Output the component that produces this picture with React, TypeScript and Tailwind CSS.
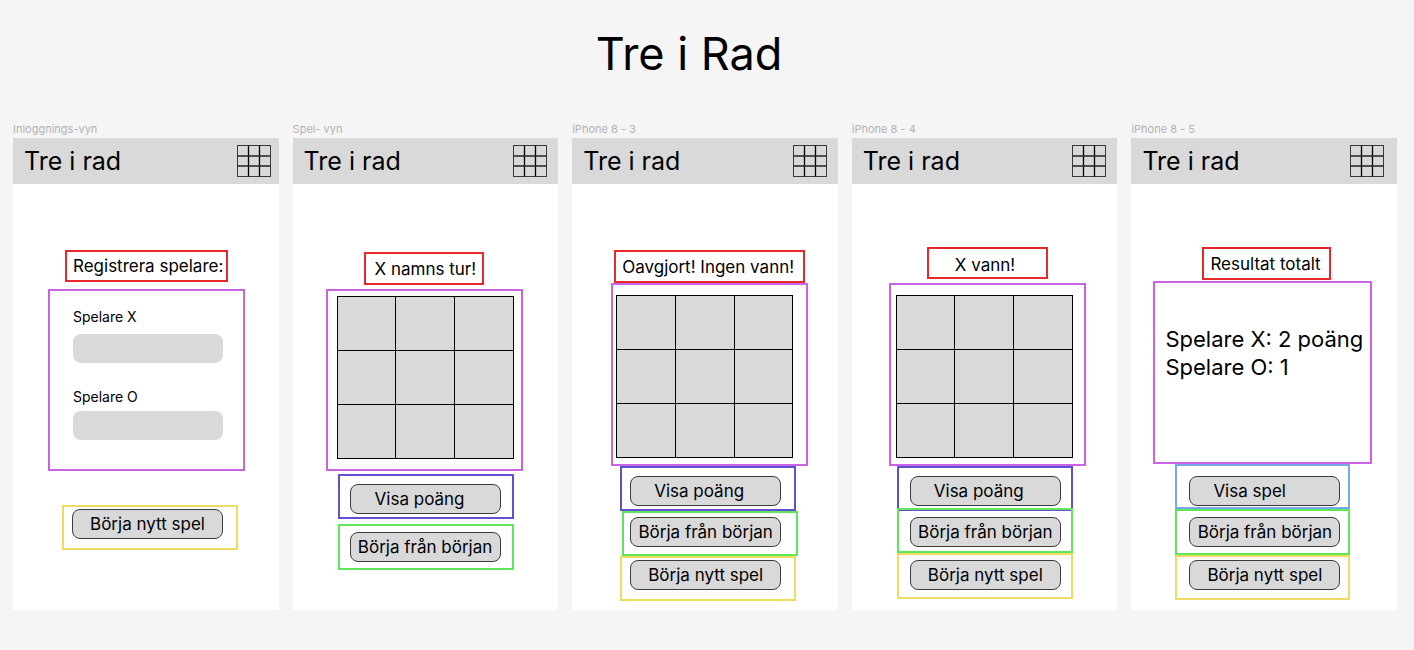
import type { ReactNode } from "react";

const tones = {
  red: "border-[#e8292c]",
  purple: "border-[#cc62e6]",
  indigo: "border-[#6250d2]",
  sky: "border-[#76a9e6]",
  green: "border-[#5fe65b]",
  yellow: "border-[#eedc60]",
};

function Zone({ tone, className, children }: { tone: keyof typeof tones; className: string; children: ReactNode }) {
  return <div className={`shrink-0 border-2 ${tones[tone]} ${className}`}>{children}</div>;
}

function Status({ className, children }: { className: string; children: ReactNode }) {
  return (
    <Zone tone="red" className={`flex items-center ${className}`}>
      <h3 className="whitespace-nowrap text-[17px] leading-6">{children}</h3>
    </Zone>
  );
}

function Action({ align = "text-center", children }: { align?: string; children: ReactNode }) {
  return (
    <button
      type="button"
      className={`block h-[30px] w-[151px] whitespace-nowrap rounded-lg border border-[#3c3c3c] bg-[#d9d9d9] text-[17px] leading-6 ${align}`}
    >
      {children}
    </button>
  );
}

function GridIcon() {
  return (
    <svg width="34" height="32" viewBox="0 0 34 32" fill="none" aria-hidden="true">
      <rect x="0.5" y="0.5" width="33" height="31" stroke="#3a3a3a" />
      <path d="M11.5 0.5V31.5M22.5 0.5V31.5" stroke="#000" strokeWidth="1.3" />
      <path d="M0.5 11H33.5M0.5 21H33.5" stroke="#222" strokeWidth="1.7" />
    </svg>
  );
}

function Board() {
  return (
    <div className="grid h-[163px] w-[177px] grid-cols-3 gap-px border border-black bg-black">
      {Array.from({ length: 9 }, (_, i) => (
        <button key={i} type="button" aria-label={`Ruta ${i + 1}`} className="bg-[#d9d9d9]" />
      ))}
    </div>
  );
}

function Phone({ name, iconSpace = "pr-[11px]", children }: { name: string; iconSpace?: string; children: ReactNode }) {
  return (
    <section className="min-w-[265px]">
      <h2 className="h-[17px] text-[11px] leading-4 text-[#b3b3b3]">{name}</h2>
      <div className="min-h-[472px] bg-white">
        <header className={`flex h-[46px] items-center justify-between bg-[#d9d9d9] pl-[11px] ${iconSpace}`}>
          <span className="text-[25px] leading-8">Tre i rad</span>
          <GridIcon />
        </header>
        <div className="flex flex-col items-start">{children}</div>
      </div>
    </section>
  );
}

function PlayerField({ id, label, gap }: { id: string; label: string; gap: string }) {
  return (
    <div className={`flex flex-col ${gap}`}>
      <label htmlFor={id} className="text-sm leading-5">
        {label}
      </label>
      <input id={id} type="text" className="h-[29px] w-[150px] rounded-lg bg-[#d9d9d9] px-2 text-sm" />
    </div>
  );
}

export default function App() {
  return (
    <main className="min-h-screen bg-[#f5f5f5] pb-10 font-[Inter,sans-serif] text-black">
      <h1 className="pr-9 pt-6 text-center text-[45px] leading-[60px]">Tre i Rad</h1>
      <div className="grid grid-cols-5 gap-[14px] pl-[13px] pr-[17px] pt-[37px]">
        <Phone name="Inloggnings-vyn" iconSpace="pr-2">
          <Status className="ml-[52px] mt-[66px] h-8 w-[163px] pl-1.5">Registrera spelare:</Status>
          <Zone tone="purple" className="ml-[35px] mt-[7px] flex h-[182px] w-[197px] flex-col gap-6 pl-[23px] pt-4">
            <PlayerField id="player-x" label="Spelare X" gap="gap-[7px]" />
            <PlayerField id="player-o" label="Spelare O" gap="gap-1" />
          </Zone>
          <Zone tone="yellow" className="ml-[49px] mt-[34px] h-[45px] w-[176px] pl-2 pt-0.5">
            <Action>Börja nytt spel</Action>
          </Zone>
        </Phone>

        <Phone name="Spel- vyn">
          <Status className="ml-[71px] mt-[68px] h-[33px] w-[120px] pl-[9px]">X namns tur!</Status>
          <Zone tone="purple" className="ml-[33px] mt-1 h-[182px] w-[197px] pl-[9px] pt-[5px]">
            <Board />
          </Zone>
          <Zone tone="indigo" className="ml-[45px] mt-[3px] h-[45px] w-[176px] pl-[10px] pt-2">
            <Action align="pl-6 text-left">Visa poäng</Action>
          </Zone>
          <Zone tone="green" className="ml-[45px] mt-[5px] h-[46px] w-[176px] pl-[10px] pt-1.5">
            <Action>Börja från början</Action>
          </Zone>
        </Phone>

        <Phone name="iPhone 8 - 3">
          <Status className="ml-[42px] mt-[66px] h-[33px] w-[191px] pl-1.5">Oavgjort! Ingen vann!</Status>
          <Zone tone="purple" className="ml-[39px] h-[183px] w-[197px] pl-[3px] pt-[10px]">
            <Board />
          </Zone>
          <Zone tone="indigo" className="ml-[48px] h-[45px] w-[176px] pl-2 pt-2">
            <Action align="pl-[23px] text-left">Visa poäng</Action>
          </Zone>
          <Zone tone="green" className="ml-[50px] h-[45px] w-[176px] pl-1.5 pt-1">
            <Action>Börja från början</Action>
          </Zone>
          <Zone tone="yellow" className="ml-[48px] h-[45px] w-[176px] pl-2 pt-0.5">
            <Action>Börja nytt spel</Action>
          </Zone>
        </Phone>

        <Phone name="iPhone 8 - 4">
          <Status className="ml-[75px] mt-[63px] h-8 w-[121px] pl-[26px] pt-[3px]">X vann!</Status>
          <Zone tone="purple" className="ml-[37px] mt-1 h-[183px] w-[197px] pl-[5px] pt-[10px]">
            <Board />
          </Zone>
          <Zone tone="indigo" className="ml-[45px] h-[45px] w-[176px] pl-[11px] pt-2">
            <Action align="pl-[23px] text-left">Visa poäng</Action>
          </Zone>
          <Zone tone="green" className="-mt-[3px] ml-[45px] h-[45px] w-[176px] pl-[11px] pt-[7px]">
            <Action>Börja från början</Action>
          </Zone>
          <Zone tone="yellow" className="ml-[45px] h-[46px] w-[176px] pl-[11px] pt-[5px]">
            <Action>Börja nytt spel</Action>
          </Zone>
        </Phone>

        <Phone name="iPhone 8 - 5" iconSpace="pr-[13px]">
          <Status className="ml-[71px] mt-[63px] h-[33px] w-[129px] pl-1.5">Resultat totalt</Status>
          <Zone tone="purple" className="ml-[22px] mt-px h-[183px] w-[219px] pl-[10px] pt-[42px]">
            <p className="whitespace-nowrap text-[22px] leading-7">Spelare X: 2 poäng</p>
            <p className="whitespace-nowrap text-[22px] leading-7">Spelare O: 1</p>
          </Zone>
          <Zone tone="sky" className="ml-[44px] h-[45px] w-[175px] pl-3 pt-[10px]">
            <Action align="pl-[23px] text-left">Visa spel</Action>
          </Zone>
          <Zone tone="green" className="ml-[44px] h-[46px] w-[175px] pl-3 pt-1.5">
            <Action>Börja från början</Action>
          </Zone>
          <Zone tone="yellow" className="ml-[44px] h-[45px] w-[175px] pl-3 pt-[3px]">
            <Action>Börja nytt spel</Action>
          </Zone>
        </Phone>
      </div>
    </main>
  );
}
